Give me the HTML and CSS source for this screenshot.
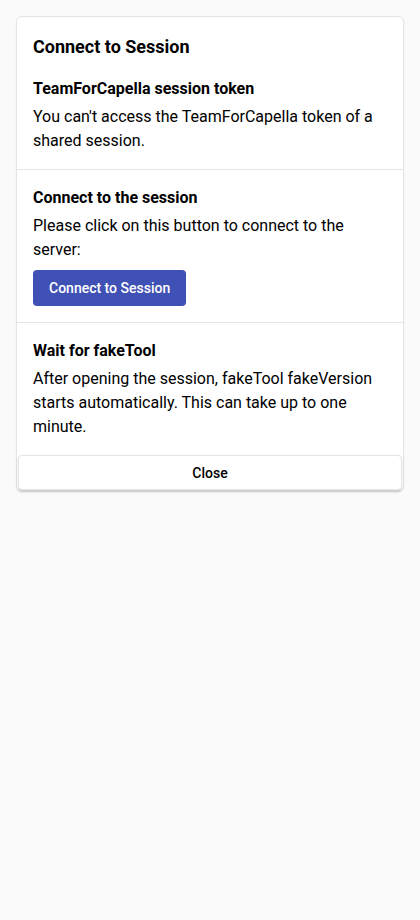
FILE: index.html
```html
<!DOCTYPE html>
<html lang="en">
<head>
<meta charset="utf-8">
<title>Connect to Session</title>
<link rel="stylesheet" href="styles.css">
</head>
<body>
<div class="card">
  <section class="section first">
    <h2 class="title">Connect to Session</h2>
    <h3 class="heading">TeamForCapella session token</h3>
    <p class="text">You can't access the TeamForCapella token of a shared session.</p>
  </section>
  <section class="section">
    <h3 class="heading">Connect to the session</h3>
    <p class="text">Please click on this button to connect to the server:</p>
    <button class="primary">Connect to Session</button>
  </section>
  <section class="section last">
    <h3 class="heading">Wait for fakeTool</h3>
    <p class="text">After opening the session, fakeTool fakeVersion starts automatically. This can take up to one minute.</p>
  </section>
  <button class="close">Close</button>
</div>
</body>
</html>
```
FILE: styles.css
```css
html, body {
  margin: 0;
  padding: 0;
  background: #fafafa;
}
body {
  padding: 16px;
  font-family: Roboto, "Liberation Sans", sans-serif;
  color: #000;
}
.card {
  width: 388px;
  box-sizing: border-box;
  background: #fff;
  border: 1px solid #e4e4e7;
  border-radius: 6px;
  box-shadow: 0 1px 2px rgba(0,0,0,0.05);
  display: flex;
  flex-direction: column;
}
.section {
  padding: 16px;
  border-bottom: 1px solid #e4e4e7;
}
.section.last {
  border-bottom: none;
}
.title {
  margin: 0 0 16px;
  font-size: 18px;
  line-height: 28px;
  font-weight: 700;
}
.heading {
  margin: 0 0 4px;
  font-size: 16px;
  line-height: 24px;
  font-weight: 700;
}
.text {
  margin: 0;
  font-size: 16px;
  line-height: 24px;
}
.primary {
  align-self: flex-start;
  margin-top: 8px;
  height: 36px;
  padding: 0 16px;
  border: none;
  border-radius: 4px;
  background: #3f51b5;
  color: #fff;
  font-family: Roboto, "Liberation Sans", sans-serif;
  font-size: 14px;
  font-weight: 500;
}
.close {
  margin: 0 1px 1px;
  height: 35px;
  border: 1px solid #e6e6e6;
  border-radius: 4px;
  background: #fff;
  box-shadow: 0 2px 2px -1px rgba(0,0,0,0.18), 0 1px 3px 0 rgba(0,0,0,0.1);
  color: #000;
  font-family: Roboto, "Liberation Sans", sans-serif;
  font-size: 14px;
  font-weight: 500;
}
```
